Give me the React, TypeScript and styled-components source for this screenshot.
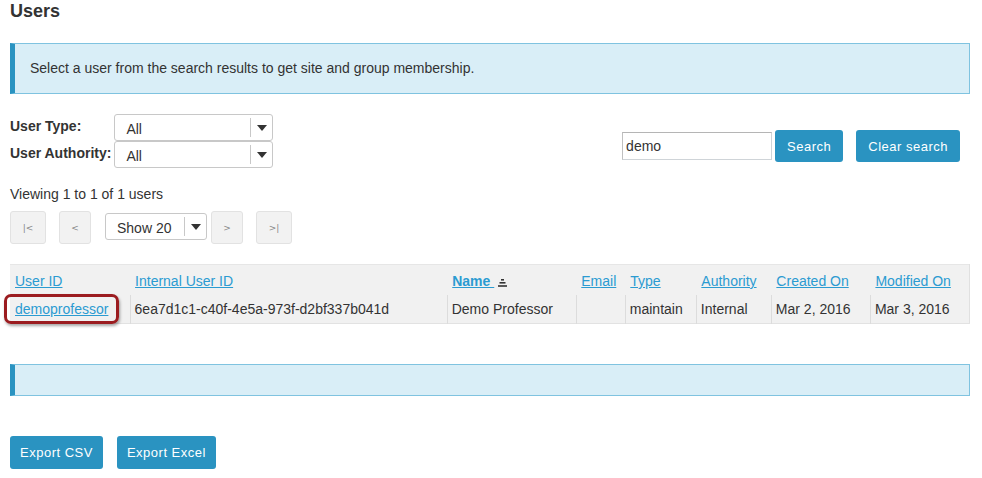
import React from "react";
import styled, { createGlobalStyle } from "styled-components";

const Global = createGlobalStyle`
  html, body { margin: 0; padding: 0; background: #fff; }
  body { font-family: "Liberation Sans", Arial, sans-serif; font-size: 14px; color: #333; }
`;

const Page = styled.div`
  width: 960px;
  padding: 0 12px 0 10px;
`;

const Title = styled.h2`
  margin: 0 0 21px;
  font-size: 18px;
  line-height: 22px;
  font-weight: bold;
  color: #333;
`;

const InfoBox = styled.div<{ $empty?: boolean }>`
  box-sizing: border-box;
  background: #d9eef7;
  border: 1px solid #7fc3e0;
  border-left: 5px solid #2a93c1;
  padding: 15px;
  min-height: ${(p) => (p.$empty ? "32px" : "51px")};
  line-height: 19px;
  font-size: 14px;
  color: #333;
`;

const FilterBar = styled.div`
  display: flex;
  justify-content: space-between;
  align-items: flex-start;
  margin-top: 20px;
`;

const FilterGrid = styled.div`
  display: grid;
  grid-template-columns: max-content 159px;
  grid-auto-rows: 27px;
`;

const FilterLabel = styled.label`
  font-weight: bold;
  font-size: 14px;
  line-height: 16px;
  padding-top: 4px;
  padding-right: 3px;
  white-space: nowrap;
`;

const SelectBox = styled.div<{ $w?: number }>`
  box-sizing: border-box;
  display: flex;
  align-items: center;
  width: ${(p) => (p.$w ? `${p.$w}px` : "100%")};
  height: 27px;
  border: 1px solid #c8c8c8;
  border-radius: 3px;
  background: #fff;
  font-size: 14px;
`;

const SelectValue = styled.span`
  flex: 1;
  padding-left: 11px;
  padding-top: 2px;
`;

const SelectArrow = styled.span`
  display: flex;
  align-items: center;
  justify-content: center;
  width: 21px;
  height: 19px;
  border-left: 1px solid #c8c8c8;
  &::after {
    content: "";
    border-left: 5px solid transparent;
    border-right: 5px solid transparent;
    border-top: 6px solid #333;
  }
`;

const SearchGroup = styled.div`
  display: flex;
  align-items: center;
  padding-top: 16px;
  margin-right: 10px;
`;

const SearchInput = styled.input`
  box-sizing: border-box;
  width: 150px;
  height: 28px;
  border: 1px solid #cfd4d8;
  border-top-color: #b5b5b5;
  border-left-color: #c0c0c0;
  padding: 0 3px;
  font-family: "Liberation Sans", Arial, sans-serif;
  font-size: 14px;
  color: #333;
  margin-right: 3px;
  outline: none;
`;

const Button = styled.button<{ $h?: number; $ml?: number; $px?: number }>`
  box-sizing: border-box;
  height: ${(p) => p.$h ?? 33}px;
  margin-left: ${(p) => p.$ml ?? 0}px;
  padding: 0 ${(p) => p.$px ?? 12}px;
  border: none;
  border-radius: 3px;
  background: #2a93c1;
  color: #fff;
  font-family: "Liberation Sans", Arial, sans-serif;
  font-size: 13px;
  font-weight: normal;
  letter-spacing: 0.5px;
  cursor: pointer;
`;

const Viewing = styled.div`
  margin-top: 16px;
  line-height: 20px;
  font-size: 14px;
`;

const Pager = styled.div`
  display: flex;
  align-items: center;
  margin-top: 7px;
  height: 33px;
`;

const PageButton = styled.button<{ $w: number; $ml?: number }>`
  box-sizing: border-box;
  width: ${(p) => p.$w}px;
  height: 33px;
  margin-left: ${(p) => p.$ml ?? 0}px;
  border: 1px solid #e2e2e2;
  border-radius: 3px;
  background: #f2f2f2;
  color: #888;
  font-family: "DejaVu Sans", sans-serif;
  font-size: 9px;
  padding: 0;
`;

const PageSelectWrap = styled.div`
  margin: 0 4px 0 14px;
  position: relative;
  top: -1px;
`;

const Table = styled.table`
  margin-top: 20px;
  width: 960px;
  border-collapse: collapse;
  table-layout: fixed;
  background: #f1f1f1;
  border-top: 1px solid #e6e6e6;
  border-right: 1px solid #e0e0e0;
  border-bottom: 1px solid #e2e2e2;
`;

const Th = styled.th`
  text-align: left;
  font-weight: normal;
  height: 28px;
  padding: 2px 4px 0 5px;
  font-size: 14px;
`;

const Td = styled.td<{ $first?: boolean }>`
  height: 28px;
  padding: 0 4px;
  border-left: ${(p) => (p.$first ? "none" : "1px solid #dcdcdc")};
  white-space: nowrap;
  font-size: 14px;
  color: #333;
`;

const Link = styled.a<{ $bold?: boolean }>`
  color: #2b9bd1;
  text-decoration: underline;
  font-weight: ${(p) => (p.$bold ? "bold" : "normal")};
  cursor: pointer;
`;

const Highlight = styled.span`
  position: relative;
  display: inline-block;
  margin-left: 1px;
`;

const RedRing = styled.span`
  position: absolute;
  left: -11px;
  top: -7px;
  width: 115px;
  height: 30px;
  box-sizing: border-box;
  border: 3px solid #9b1c20;
  border-radius: 7px;
  box-shadow: 1px 2px 3px rgba(0, 0, 0, 0.35);
  pointer-events: none;
`;

const SortIcon = () => (
  <svg width="9" height="8" viewBox="0 0 9 8" style={{ marginLeft: 4, verticalAlign: "-1px" }}>
    <rect x="3" y="0" width="3" height="1.6" fill="#333" />
    <rect x="1.5" y="3" width="6" height="1.6" fill="#333" />
    <rect x="0" y="6.2" width="9" height="1.6" fill="#333" />
  </svg>
);

const Exports = styled.div`
  display: flex;
  margin-top: 40px;
  gap: 14px;
`;

const Spacer = styled.div<{ $h: number }>`
  height: ${(p) => p.$h}px;
`;

const columns = [
  { label: "User ID", w: 120 },
  { label: "Internal User ID", w: 317 },
  { label: "Name", w: 129, bold: true },
  { label: "Email", w: 49 },
  { label: "Type", w: 71 },
  { label: "Authority", w: 75 },
  { label: "Created On", w: 99 },
  { label: "Modified On", w: 99 },
];

const Select = ({ value, w }: { value: string; w?: number }) => (
  <SelectBox $w={w}>
    <SelectValue>{value}</SelectValue>
    <SelectArrow />
  </SelectBox>
);

export default function App() {
  return (
    <Page>
      <Global />
      <Title>Users</Title>
      <InfoBox>Select a user from the search results to get site and group membership.</InfoBox>

      <FilterBar>
        <FilterGrid>
          <FilterLabel>User Type:</FilterLabel>
          <Select value="All" />
          <FilterLabel>User Authority:</FilterLabel>
          <Select value="All" />
        </FilterGrid>
        <SearchGroup>
          <SearchInput defaultValue="demo" />
          <Button $h={32}>Search</Button>
          <Button $h={32} $ml={13}>Clear search</Button>
        </SearchGroup>
      </FilterBar>

      <Viewing>Viewing 1 to 1 of 1 users</Viewing>
      <Pager>
        <PageButton $w={36}>|&lt;</PageButton>
        <PageButton $w={32} $ml={13}>&lt;</PageButton>
        <PageSelectWrap>
          <Select value="Show 20" w={102} />
        </PageSelectWrap>
        <PageButton $w={32}>&gt;</PageButton>
        <PageButton $w={36} $ml={13}>&gt;|</PageButton>
      </Pager>

      <Table>
        <colgroup>
          {columns.map((c) => (
            <col key={c.label} style={{ width: c.w }} />
          ))}
        </colgroup>
        <thead>
          <tr>
            {columns.map((c) => (
              <Th key={c.label}>
                <Link $bold={c.bold}>{c.bold ? "Name " : c.label}</Link>
                {c.bold && <SortIcon />}
              </Th>
            ))}
          </tr>
        </thead>
        <tbody>
          <tr>
            <Td $first>
              <Highlight>
                <Link>demoprofessor</Link>
                <RedRing />
              </Highlight>
            </Td>
            <Td>6ea7d1c1-c40f-4e5a-973f-d2bf337b041d</Td>
            <Td>Demo Professor</Td>
            <Td></Td>
            <Td>maintain</Td>
            <Td>Internal</Td>
            <Td>Mar 2, 2016</Td>
            <Td>Mar 3, 2016</Td>
          </tr>
        </tbody>
      </Table>

      <Spacer $h={40} />
      <InfoBox $empty />

      <Exports>
        <Button $px={10}>Export CSV</Button>
        <Button $px={10}>Export Excel</Button>
      </Exports>
    </Page>
  );
}
